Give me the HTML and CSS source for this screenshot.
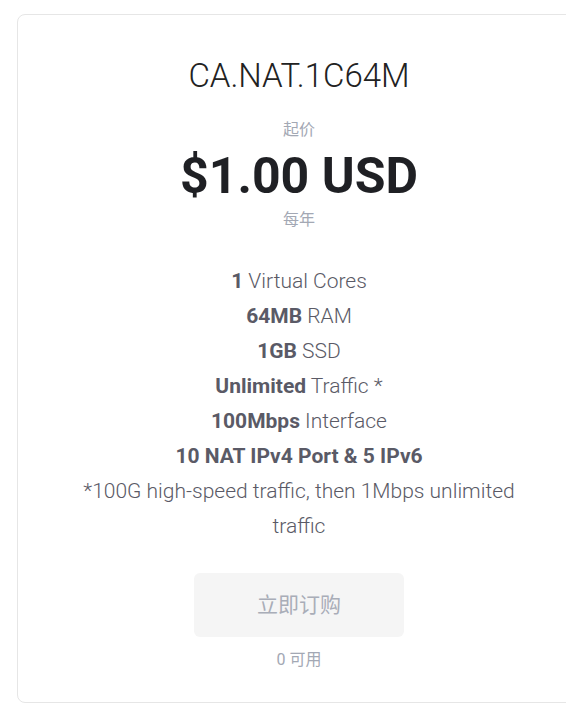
FILE: index.html
```html
<!DOCTYPE html>
<html lang="zh">
<head>
<meta charset="utf-8">
<link rel="stylesheet" href="styles.css">
</head>
<body>
<div class="viewport">
  <div class="card">
    <h1 class="title">CA.NAT.1C64M</h1>
    <div class="label label-top">起价</div>
    <div class="price">$1.00 USD</div>
    <div class="label label-bottom">每年</div>
    <ul class="features">
      <li><b>1</b> Virtual Cores</li>
      <li><b>64MB</b> RAM</li>
      <li><b>1GB</b> SSD</li>
      <li><b>Unlimited</b> Traffic *</li>
      <li><b>100Mbps</b> Interface</li>
      <li><b>10 NAT IPv4 Port &amp; 5 IPv6</b></li>
      <li>*100G high-speed traffic, then 1Mbps unlimited traffic</li>
    </ul>
    <div class="btn">立即订购</div>
    <div class="avail">0 可用</div>
  </div>
</div>
</body>
</html>
```
FILE: styles.css
```css
html, body {
  margin: 0;
  padding: 0;
  background: #fff;
}
.viewport {
  width: 566px;
  height: 706px;
  overflow: hidden;
  padding: 14px 0 0 17px;
  box-sizing: border-box;
}
.card {
  width: 564px;
  height: 689px;
  box-sizing: border-box;
  border: 1px solid #e6e6e6;
  border-radius: 8px;
  font-family: Roboto, "Noto Sans CJK SC", sans-serif;
  text-align: center;
  display: flex;
  flex-direction: column;
  align-items: center;
  padding-top: 41px;
}
.title {
  margin: 0;
  font-size: 33px;
  font-weight: 300;
  color: #222;
  line-height: 40px;
}
.label {
  font-size: 16px;
  color: #a3a8b4;
  line-height: 20px;
}
.label-top { margin-top: 24px; }
.label-bottom { margin-top: 5px; }
.price {
  margin-top: 7px;
  font-size: 50px;
  font-weight: 700;
  color: #1f2024;
  line-height: 58px;
}
.features {
  list-style: none;
  margin: 34px 0 0;
  padding: 0;
  width: 470px;
  font-size: 21px;
  line-height: 35px;
  font-weight: 300;
  color: #5a5a66;
}
.features b { font-weight: 700; }
.btn {
  margin-top: 29px;
  width: 210px;
  height: 64px;
  line-height: 64px;
  background: #f5f5f5;
  border-radius: 6px;
  font-size: 21px;
  color: #a9adb8;
}
.avail {
  margin-top: 13px;
  font-size: 16px;
  color: #a3a8b4;
  line-height: 20px;
}
```
